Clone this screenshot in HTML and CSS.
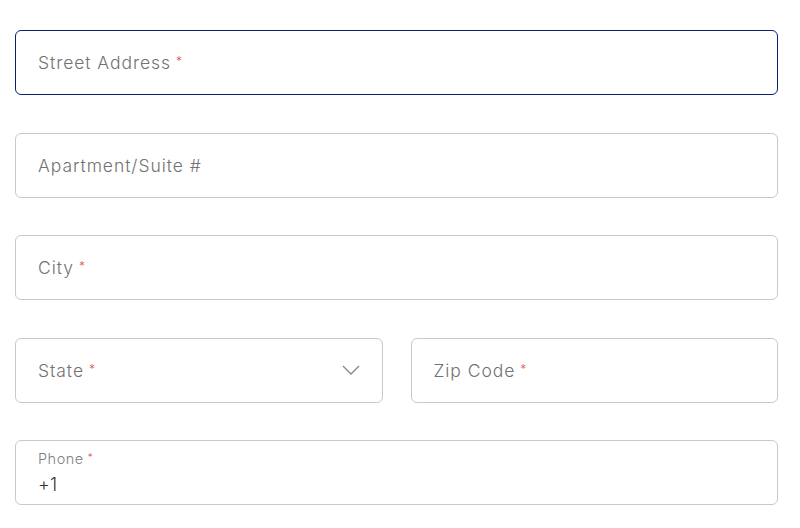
FILE: index.html
```html
<!DOCTYPE html>
<html>
<head>
<meta charset="utf-8">
<link rel="stylesheet" href="styles.css">
</head>
<body>
<form class="form">
  <div class="field focused"><span class="label">Street Address<span class="req">*</span></span></div>
  <div class="field"><span class="label">Apartment/Suite #</span></div>
  <div class="field"><span class="label">City<span class="req">*</span></span></div>
  <div class="row">
    <div class="field select"><span class="label">State<span class="req">*</span></span>
      <svg class="chev" width="18" height="10" viewBox="0 0 18 10"><path d="M1 1 L9 9 L17 1" fill="none" stroke="#8a8a8a" stroke-width="1.4"/></svg>
    </div>
    <div class="field"><span class="label">Zip Code<span class="req">*</span></span></div>
  </div>
  <div class="field filled">
    <span class="small-label">Phone<span class="req">*</span></span>
    <span class="value">+1</span>
  </div>
</form>
</body>
</html>
```
FILE: styles.css
```css
html, body {
  margin: 0;
  padding: 0;
  background: #fff;
}
body {
  font-family: Inter, "Noto Sans", "Liberation Sans", sans-serif;
}
.form {
  display: flex;
  flex-direction: column;
  gap: 37.5px;
  padding: 30px 22px 0 15px;
}
.row {
  display: flex;
  gap: 28px;
}
.row .field {
  flex: 1;
}
.field {
  box-sizing: border-box;
  height: 65px;
  border: 1.3px solid #c9c9c9;
  border-radius: 6px;
  padding: 0 22px;
  display: flex;
  align-items: center;
  justify-content: space-between;
}
.field.focused {
  border: 1.5px solid #0b1e78;
}
.label {
  font-size: 17.5px;
  font-weight: 300;
  color: #727272;
  letter-spacing: 0.95px;
}
.req {
  color: #d9534f;
  font-size: 12px;
  margin-left: 5px;
  position: relative;
  top: -4px;
}
.field.filled {
  flex-direction: column;
  align-items: flex-start;
  justify-content: center;
  gap: 5px;
}
.small-label {
  font-size: 14.5px;
  font-weight: 300;
  color: #808080;
  letter-spacing: 0.5px;
  line-height: 18px;
}
.small-label .req {
  font-size: 10px;
  margin-left: 4px;
  top: -3px;
}
.value {
  font-size: 18px;
  font-weight: 300;
  color: #333;
  line-height: 22px;
  letter-spacing: 0.3px;
}
```
